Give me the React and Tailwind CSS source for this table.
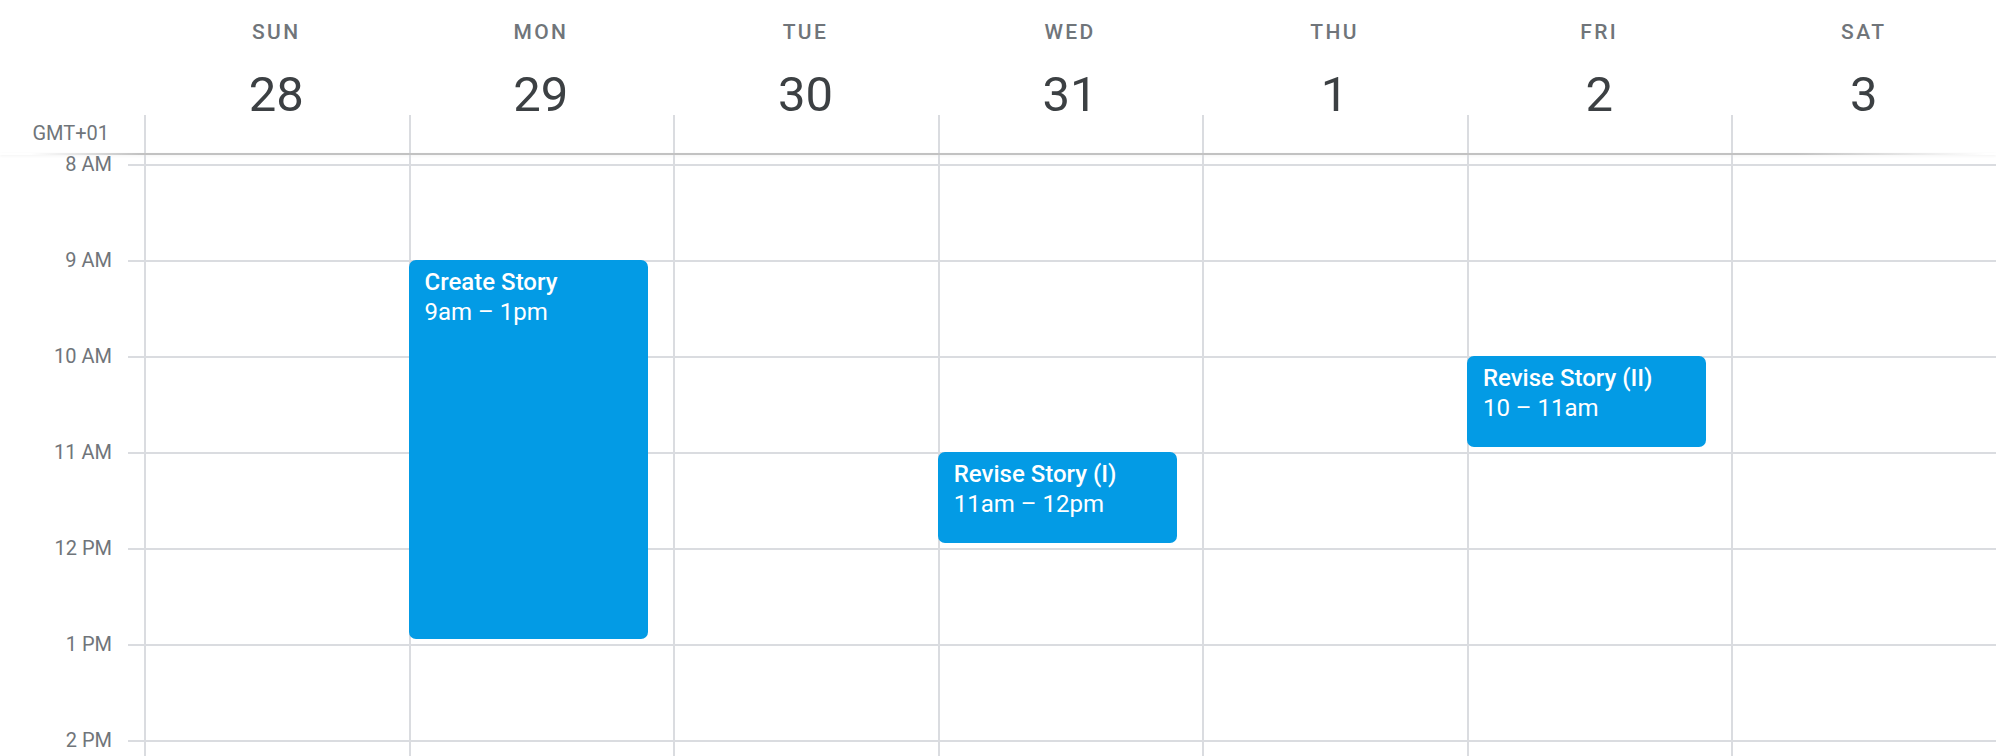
import React from "react";

const DAYS = [
  { name: "SUN", date: 28 },
  { name: "MON", date: 29 },
  { name: "TUE", date: 30 },
  { name: "WED", date: 31 },
  { name: "THU", date: 1 },
  { name: "FRI", date: 2 },
  { name: "SAT", date: 3 },
];

// grid is scrolled so that only the bottom 9px of the 7 AM slot shows
const HOURS = ["8 AM", "9 AM", "10 AM", "11 AM", "12 PM", "1 PM", "2 PM"];
const FIRST_HOUR = 8;
const HOUR_PX = 96;
const TOP_GAP = 9;

const EVENTS = [
  { day: 1, start: 9, end: 13, title: "Create Story", time: "9am – 1pm" },
  { day: 3, start: 11, end: 12, title: "Revise Story (I)", time: "11am – 12pm" },
  { day: 5, start: 10, end: 11, title: "Revise Story (II)", time: "10 – 11am" },
];

function EventCard({ ev }) {
  return (
    <div
      className="absolute left-[-2px] w-[239px] rounded-[7px] bg-[#039be5] pl-[16px] pt-[7px] text-white text-[24px] leading-[30px]"
      style={{
        top: TOP_GAP + (ev.start - FIRST_HOUR) * HOUR_PX,
        height: (ev.end - ev.start) * HOUR_PX - 5,
      }}
    >
      <div className="font-medium">{ev.title}</div>
      <div>{ev.time}</div>
    </div>
  );
}

export default function App() {
  return (
    <div className="w-[1996px] h-[756px] overflow-hidden bg-white font-['Roboto',sans-serif]">
      {/* header */}
      <div className="flex h-[153px]">
        <div className="w-[144px] shrink-0 pt-[121px] pr-[35px] text-right text-[20px] leading-[24px] text-[#70757a]">
          GMT+01
        </div>
        {DAYS.map((d) => (
          <div key={d.name} className="flex-1 flex flex-col">
            <div className="pt-[20px] text-center text-[21px] leading-[24px] font-medium tracking-[2.4px] text-[#70757a]">
              {d.name}
            </div>
            <div className="mt-[31px] text-center text-[49px] leading-[40px] text-[#3c4043]">
              {d.date}
            </div>
            <div className="flex-1 border-l-2 border-[#dadce0]" />
          </div>
        ))}
      </div>
      <div className="h-[2px] bg-[linear-gradient(to_right,transparent_30px,#c2c2c2_140px,#c2c2c2_90%,transparent_99.5%)] shadow-[0_1px_3px_rgba(0,0,0,0.06)]" />

      {/* time grid */}
      <div className="flex">
        <div className="w-[144px] shrink-0 pt-[9px]">
          {HOURS.map((h) => (
            <div key={h} className="relative h-[96px] flex justify-end">
              <div className="w-[16px] h-0 border-t-2 border-[#dadce0]" />
              <span className="absolute right-[32px] top-[-12px] text-[20px] leading-[24px] text-[#70757a]">
                {h}
              </span>
            </div>
          ))}
        </div>
        {DAYS.map((d, i) => (
          <div key={d.name} className="flex-1 relative pt-[9px] border-l-2 border-[#dadce0]">
            {HOURS.map((h) => (
              <div key={h} className="h-[96px] border-t-2 border-[#dadce0]" />
            ))}
            {EVENTS.filter((ev) => ev.day === i).map((ev) => (
              <EventCard key={ev.title} ev={ev} />
            ))}
          </div>
        ))}
      </div>
    </div>
  );
}
